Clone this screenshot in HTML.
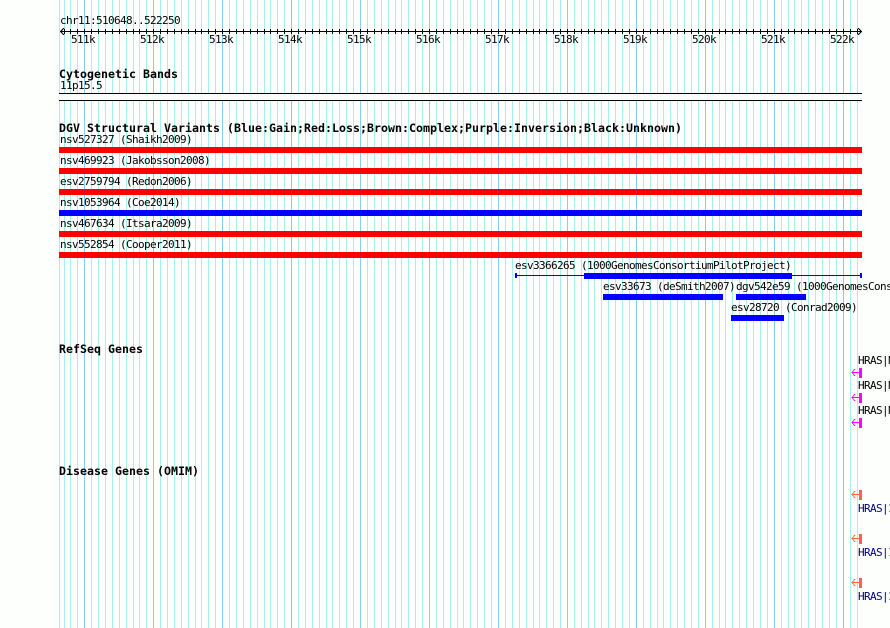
<!DOCTYPE html>
<html><head><meta charset="utf-8"><style>
html,body{margin:0;padding:0;background:#fdfffc;width:890px;height:628px;overflow:hidden}
svg{display:block}
text{font-family:"DejaVu Sans Mono","Liberation Mono",monospace;font-size:11px;letter-spacing:-0.622px;fill:#000;white-space:pre}
text.b{font-weight:bold;font-size:11.6px;letter-spacing:0.02px}
text.n{fill:#000080}
</style></head><body>
<svg width="890" height="628" viewBox="0 0 890 628" xmlns="http://www.w3.org/2000/svg">
<rect width="890" height="628" fill="#fdfffc"/>
<path shape-rendering="crispEdges" stroke="#aaeeee" stroke-width="1" fill="none" d="M59.5 0V628M64.5 0V628M70.5 0V628M77.5 0V628M91.5 0V628M98.5 0V628M105.5 0V628M112.5 0V628M119.5 0V628M126.5 0V628M133.5 0V628M139.5 0V628M146.5 0V628M160.5 0V628M167.5 0V628M174.5 0V628M181.5 0V628M188.5 0V628M195.5 0V628M201.5 0V628M208.5 0V628M215.5 0V628M229.5 0V628M236.5 0V628M243.5 0V628M250.5 0V628M257.5 0V628M264.5 0V628M270.5 0V628M277.5 0V628M284.5 0V628M298.5 0V628M305.5 0V628M312.5 0V628M319.5 0V628M326.5 0V628M332.5 0V628M339.5 0V628M346.5 0V628M353.5 0V628M367.5 0V628M374.5 0V628M381.5 0V628M388.5 0V628M395.5 0V628M401.5 0V628M408.5 0V628M415.5 0V628M422.5 0V628M436.5 0V628M443.5 0V628M450.5 0V628M457.5 0V628M463.5 0V628M470.5 0V628M477.5 0V628M484.5 0V628M491.5 0V628M505.5 0V628M512.5 0V628M519.5 0V628M526.5 0V628M533.5 0V628M539.5 0V628M546.5 0V628M553.5 0V628M560.5 0V628M574.5 0V628M581.5 0V628M588.5 0V628M594.5 0V628M601.5 0V628M608.5 0V628M615.5 0V628M622.5 0V628M629.5 0V628M643.5 0V628M650.5 0V628M657.5 0V628M663.5 0V628M670.5 0V628M677.5 0V628M684.5 0V628M691.5 0V628M698.5 0V628M712.5 0V628M719.5 0V628M725.5 0V628M732.5 0V628M739.5 0V628M746.5 0V628M753.5 0V628M760.5 0V628M767.5 0V628M781.5 0V628M788.5 0V628M794.5 0V628M801.5 0V628M808.5 0V628M815.5 0V628M822.5 0V628M829.5 0V628M836.5 0V628M850.5 0V628M857.5 0V628"/>
<path shape-rendering="crispEdges" stroke="#88ccf0" stroke-width="1" fill="none" d="M84.5 0V628M153.5 0V628M222.5 0V628M291.5 0V628M360.5 0V628M429.5 0V628M498.5 0V628M567.5 0V628M636.5 0V628M705.5 0V628M774.5 0V628M843.5 0V628"/>

<!-- ruler -->
<text x="60" y="24">chr11:510648..522250</text>
<path shape-rendering="crispEdges" stroke="#000" fill="none" d="M60 31.5H862M64.5 29V34M70.5 29V34M77.5 29V34M84.5 29V34M91.5 29V34M98.5 29V34M105.5 29V34M112.5 29V34M119.5 29V34M126.5 29V34M133.5 29V34M139.5 29V34M146.5 29V34M153.5 29V34M160.5 29V34M167.5 29V34M174.5 29V34M181.5 29V34M188.5 29V34M195.5 29V34M201.5 29V34M208.5 29V34M215.5 29V34M222.5 29V34M229.5 29V34M236.5 29V34M243.5 29V34M250.5 29V34M257.5 29V34M264.5 29V34M270.5 29V34M277.5 29V34M284.5 29V34M291.5 29V34M298.5 29V34M305.5 29V34M312.5 29V34M319.5 29V34M326.5 29V34M332.5 29V34M339.5 29V34M346.5 29V34M353.5 29V34M360.5 29V34M367.5 29V34M374.5 29V34M381.5 29V34M388.5 29V34M395.5 29V34M401.5 29V34M408.5 29V34M415.5 29V34M422.5 29V34M429.5 29V34M436.5 29V34M443.5 29V34M450.5 29V34M457.5 29V34M463.5 29V34M470.5 29V34M477.5 29V34M484.5 29V34M491.5 29V34M498.5 29V34M505.5 29V34M512.5 29V34M519.5 29V34M526.5 29V34M533.5 29V34M539.5 29V34M546.5 29V34M553.5 29V34M560.5 29V34M567.5 29V34M574.5 29V34M581.5 29V34M588.5 29V34M594.5 29V34M601.5 29V34M608.5 29V34M615.5 29V34M622.5 29V34M629.5 29V34M636.5 29V34M643.5 29V34M650.5 29V34M657.5 29V34M663.5 29V34M670.5 29V34M677.5 29V34M684.5 29V34M691.5 29V34M698.5 29V34M705.5 29V34M712.5 29V34M719.5 29V34M725.5 29V34M732.5 29V34M739.5 29V34M746.5 29V34M753.5 29V34M760.5 29V34M767.5 29V34M774.5 29V34M781.5 29V34M788.5 29V34M794.5 29V34M801.5 29V34M808.5 29V34M815.5 29V34M822.5 29V34M829.5 29V34M836.5 29V34M843.5 29V34M850.5 29V34M857.5 29V34"/>
<path shape-rendering="crispEdges" stroke="#000" stroke-width="1" fill="none" d="M64 28L60.7 31.5L64 35M858 28L861.3 31.5L858 35"/>
<text x="71" y="43">511k</text><text x="140" y="43">512k</text><text x="209" y="43">513k</text><text x="278" y="43">514k</text><text x="347" y="43">515k</text><text x="416" y="43">516k</text><text x="485" y="43">517k</text><text x="554" y="43">518k</text><text x="623" y="43">519k</text><text x="692" y="43">520k</text><text x="761" y="43">521k</text><text x="830" y="43">522k</text>

<!-- cytobands -->
<text class="b" x="59" y="78">Cytogenetic Bands</text>
<text x="60" y="89">11p15.5</text>
<rect x="59" y="94" width="803" height="6" fill="#fdfffc"/>
<rect x="59" y="93" width="803" height="1" fill="#000"/>
<rect x="59" y="100" width="803" height="1" fill="#000"/>

<!-- DGV -->
<text class="b" x="59" y="132">DGV Structural Variants (Blue:Gain;Red:Loss;Brown:Complex;Purple:Inversion;Black:Unknown)</text>
<text x="60" y="143">nsv527327 (Shaikh2009)</text>
<rect x="59" y="147" width="803" height="6" fill="#ff0000"/>
<text x="60" y="164">nsv469923 (Jakobsson2008)</text>
<rect x="59" y="168" width="803" height="6" fill="#ff0000"/>
<text x="60" y="185">esv2759794 (Redon2006)</text>
<rect x="59" y="189" width="803" height="6" fill="#ff0000"/>
<text x="60" y="206">nsv1053964 (Coe2014)</text>
<rect x="59" y="210" width="803" height="6" fill="#0000ff"/>
<text x="60" y="227">nsv467634 (Itsara2009)</text>
<rect x="59" y="231" width="803" height="6" fill="#ff0000"/>
<text x="60" y="248">nsv552854 (Cooper2011)</text>
<rect x="59" y="252" width="803" height="6" fill="#ff0000"/>

<text x="515" y="269">esv3366265 (1000GenomesConsortiumPilotProject)</text>
<rect x="516" y="275" width="346" height="1" fill="#0000ff"/>
<rect x="515" y="273" width="2" height="5" fill="#0000ff"/>
<rect x="860" y="273" width="2" height="5" fill="#0000ff"/>
<rect x="584" y="273" width="208" height="6" fill="#0000ff"/>
<text x="603" y="290">esv33673 (deSmith2007)</text>
<rect x="603" y="294" width="120" height="6" fill="#0000ff"/>
<text x="736" y="290">dgv542e59 (1000GenomesConsortium2010)</text>
<rect x="736" y="294" width="70" height="6" fill="#0000ff"/>
<text x="731" y="311">esv28720 (Conrad2009)</text>
<rect x="731" y="315" width="53" height="6" fill="#0000ff"/>

<!-- RefSeq -->
<text class="b" x="59" y="353">RefSeq Genes</text>
<text x="858" y="364">HRAS|NM_005343</text>
<text x="858" y="389">HRAS|NM_176795</text>
<text x="858" y="414">HRAS|NM_001130442</text>
<g fill="none" stroke="#ff00ff" stroke-width="1" shape-rendering="crispEdges">
<path d="M859 372.5H851.7M855 369L852 372.5L855 376"/>
<path d="M859 397.5H851.7M855 394L852 397.5L855 401"/>
<path d="M859 422.5H851.7M855 419L852 422.5L855 426"/>
</g>
<g fill="#ff00ff"><rect x="859" y="368" width="3" height="10"/><rect x="859" y="393" width="3" height="10"/><rect x="859" y="418" width="3" height="10"/></g>

<!-- OMIM -->
<text class="b" x="59" y="475">Disease Genes (OMIM)</text>
<g fill="none" stroke="#ff6347" stroke-width="1" shape-rendering="crispEdges">
<path d="M859 494.5H851.7M855 491L852 494.5L855 498"/>
<path d="M859 538.5H851.7M855 535L852 538.5L855 542"/>
<path d="M859 582.5H851.7M855 579L852 582.5L855 586"/>
</g>
<g fill="#ff6347"><rect x="859" y="490" width="3" height="10"/><rect x="859" y="534" width="3" height="10"/><rect x="859" y="578" width="3" height="10"/></g>
<text class="n" x="858" y="512">HRAS|190020</text>
<text class="n" x="858" y="556">HRAS|190020</text>
<text class="n" x="858" y="600">HRAS|190020</text>
</svg>
</body></html>
